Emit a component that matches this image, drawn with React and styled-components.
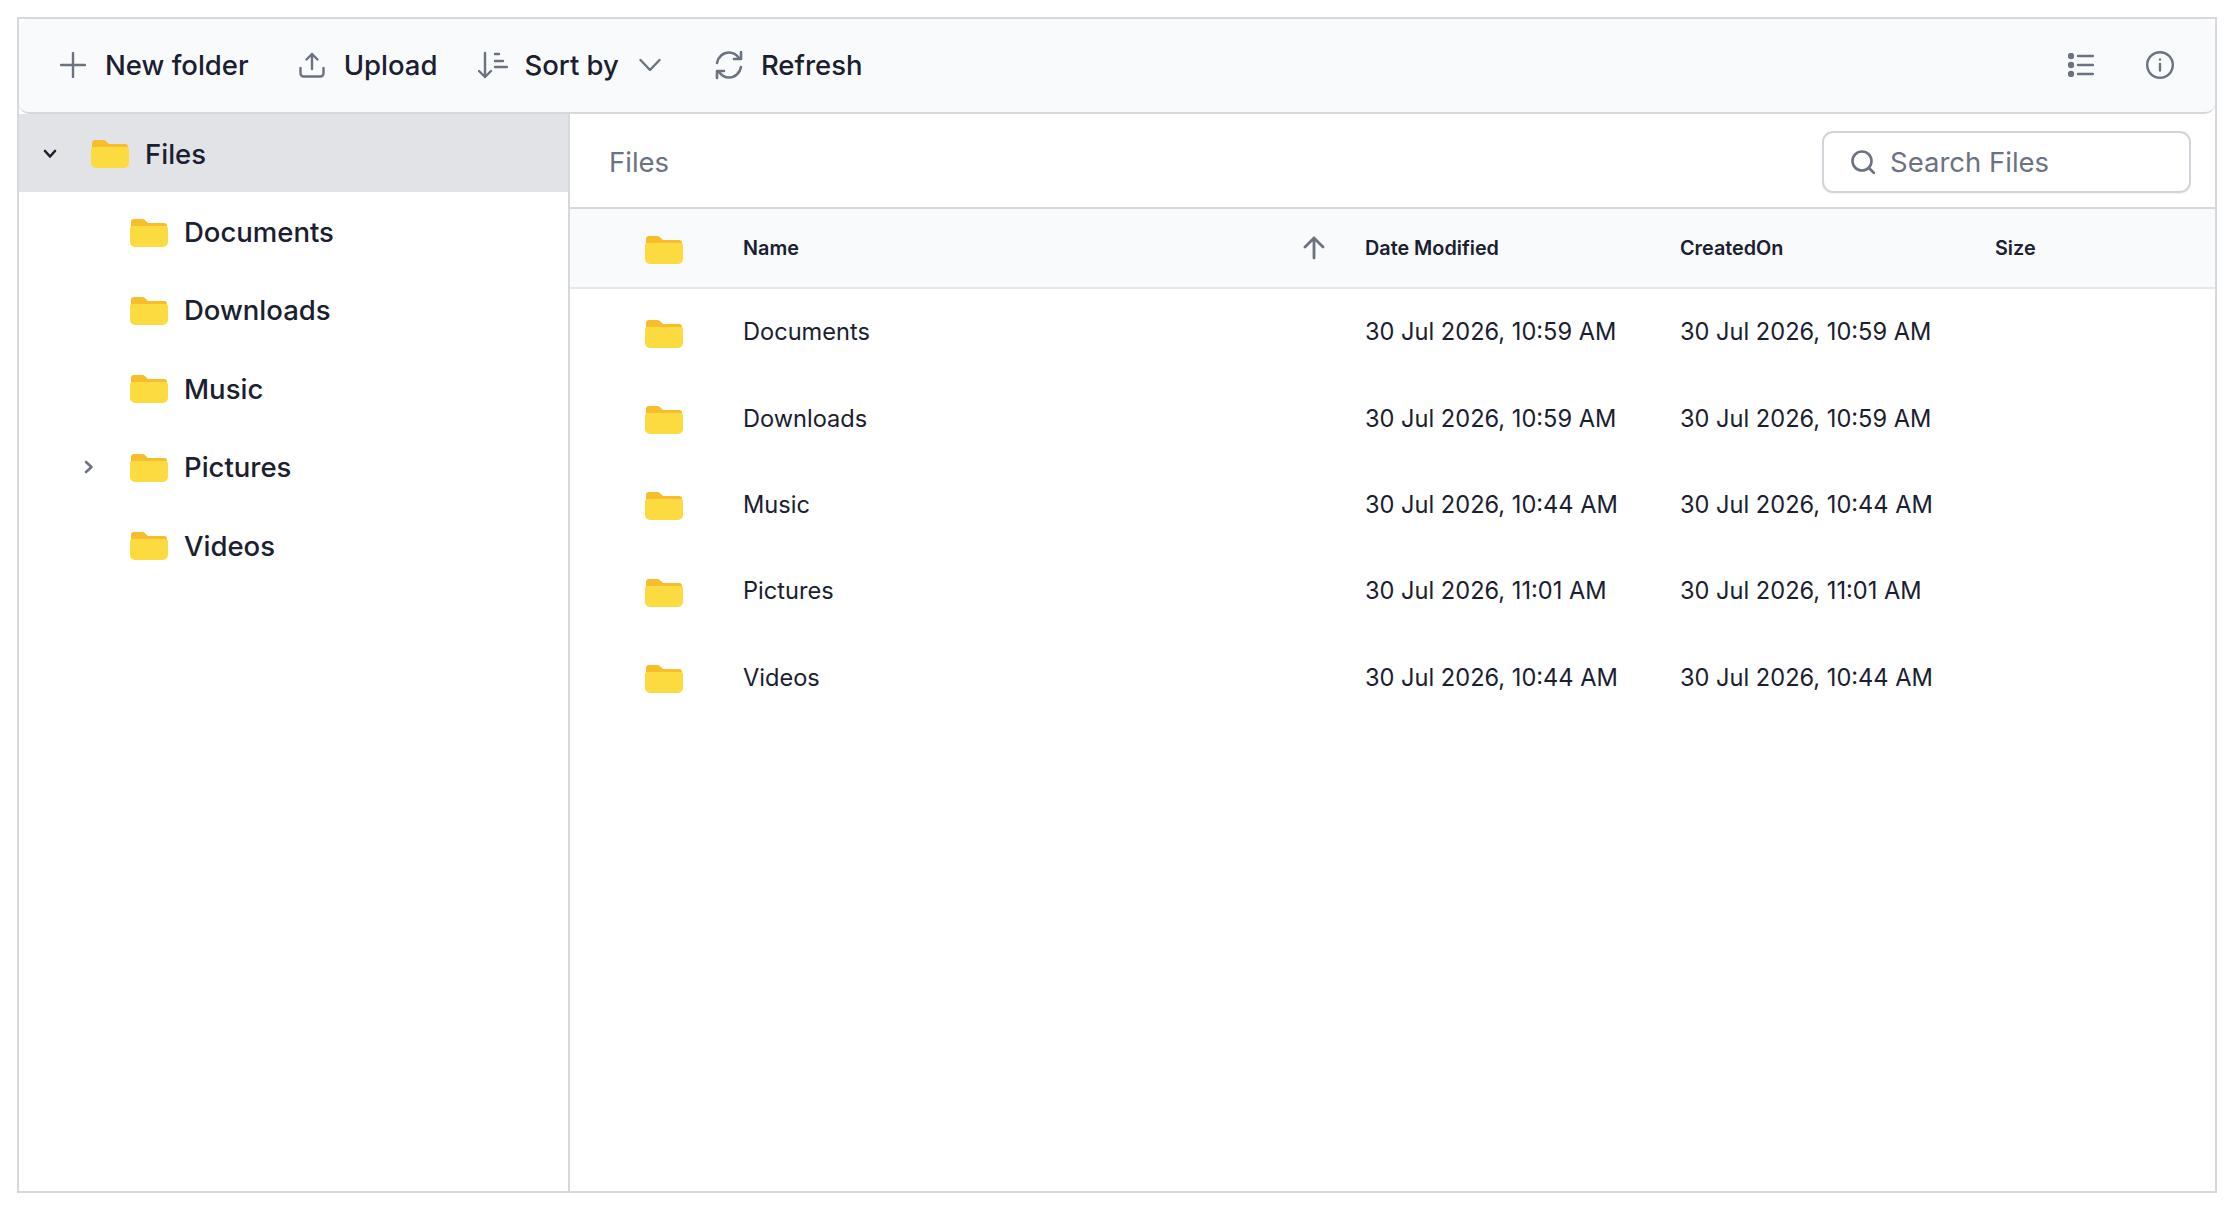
import React from "react";
import styled, { createGlobalStyle } from "styled-components";

const GlobalStyle = createGlobalStyle`
  html, body {
    margin: 0;
    padding: 0;
    background: #fff;
    font-family: Inter, "Noto Sans", sans-serif;
    color: #111827;
  }
  * {
    box-sizing: border-box;
  }
`;

const Page = styled.div`
  padding: 17px 0 0 17px;
`;
const Frame = styled.div`
  width: 2200px;
  height: 1176px;
  border: 2px solid #d6d8dc;
  display: flex;
  flex-direction: column;
  background: #fff;
`;
const Toolbar = styled.div`
  height: 95px;
  flex: none;
  display: flex;
  align-items: center;
  justify-content: space-between;
  padding: 0 0 1px 41px;
  background: #f9fafb;
  border-bottom: 2px solid #d6d8dc;
  border-radius: 10px;
`;
const ToolGroup = styled.div`
  display: flex;
  align-items: center;
`;
const ToolButton = styled.div`
  display: flex;
  align-items: center;
  gap: ${(p) => p.$gap || 14}px;
  margin-right: ${(p) => p.$after || 0}px;
  font-size: 27.5px;
  font-weight: 500;
  color: #1a2030;
  white-space: nowrap;
`;
const Caret = styled.span`
  display: flex;
  margin-left: 4px;
`;
const Icons = styled.div`
  display: flex;
  align-items: center;
  gap: 52px;
  padding-right: 41px;
`;
const Body = styled.div`
  flex: 1;
  display: flex;
  min-height: 0;
`;
const Sidebar = styled.div`
  width: 551px;
  flex: none;
  border-right: 2px solid #d6d8dc;
`;
const TreeRow = styled.div`
  height: 78.4px;
  display: flex;
  align-items: center;
  padding: 1px 0 0 ${(p) => p.$level * 39 + 21}px;
  gap: 16px;
  background: ${(p) => (p.$selected ? "#e1e3e7" : "transparent")};
  font-size: 27.5px;
  font-weight: 500;
  color: #1a2030;
`;
const Toggle = styled.div`
  width: 20px;
  height: 20px;
  flex: none;
  display: flex;
  align-items: center;
  justify-content: center;
  color: ${(p) => p.$color};
  margin-right: 15px;
`;
const Main = styled.div`
  flex: 1;
  min-width: 0;
`;
const Crumbs = styled.div`
  height: 95px;
  display: flex;
  align-items: center;
  justify-content: space-between;
  padding: 2px 24px 0 39px;
  border-bottom: 2px solid #d6d8dc;
  font-size: 27.5px;
  color: #6b7280;
`;
const Search = styled.div`
  width: 369px;
  height: 62px;
  display: flex;
  align-items: center;
  gap: 15px;
  padding-left: 27px;
  border: 2px solid #d1d5db;
  border-radius: 11px;
  box-shadow: 0 1px 2px rgba(0, 0, 0, 0.06);
  font-size: 27.5px;
  color: #6b7280;
`;
const TableRow = styled.div`
  display: grid;
  grid-template-columns: 173px 622px 315px 315px 1fr;
  align-items: center;
  height: ${(p) => (p.$head ? 79.5 : 86.4)}px;
  background: ${(p) => (p.$head ? "#f9fafb" : "transparent")};
  border-bottom: ${(p) => (p.$head ? "2px solid #e5e7eb" : "none")};
  font-size: ${(p) => (p.$head ? 19.8 : 23.6)}px;
  font-weight: ${(p) => (p.$head ? 600 : 400)};
  color: #1a2030;
`;
const IconCell = styled.div`
  display: flex;
  justify-content: center;
  padding: 3px 0 0 15px;
`;
const NameCell = styled.div`
  display: flex;
  align-items: center;
  justify-content: space-between;
  padding-right: 39px;
`;

const FolderIcon = () => (
  <svg width="38" height="29" viewBox="0 0 38 29" style={{ display: "block" }}>
    <path d="M1 4a3 3 0 0 1 3-3h8.500a3 3 0 0 1 2 .8L18 5h16a3 3 0 0 1 3 3v6H1z" fill="#f8bd2b" />
    <path d="M0 10.500A2.500 2.500 0 0 1 2.500 8h33a2.500 2.500 0 0 1 2.500 2.500V24a5 5 0 0 1-5 5H5a5 5 0 0 1-5-5z" fill="#fbdb40" />
  </svg>
);

const stroke = {
  fill: "none",
  stroke: "#6b7280",
  strokeWidth: 2.4,
  strokeLinecap: "round",
  strokeLinejoin: "round",
};

const PlusIcon = () => (
  <svg width="26" height="26" viewBox="0 0 26 26" {...stroke}>
    <path d="M13 1v24M1 13h24" />
  </svg>
);
const UploadIcon = () => (
  <svg width="26" height="26" viewBox="0 0 26 26" {...stroke}>
    <path d="M13 17V2M7.500 7.500 13 2l5.500 5.500" />
    <path d="M1.500 16v5.500a3 3 0 0 0 3 3h17a3 3 0 0 0 3-3V16" />
  </svg>
);
const SortIcon = () => (
  <svg width="30" height="28" viewBox="0 0 30 28" {...stroke}>
    <path d="M7 2v24M1 20l6 6 6-6" />
    <path d="M17 3h4M17 10h8M17 16h12" />
  </svg>
);
const ChevronDown = () => (
  <svg width="22" height="14" viewBox="0 0 22 14" {...stroke}>
    <path d="M1.500 2 11 12l9.500-10" />
  </svg>
);
const RefreshIcon = () => (
  <svg width="30" height="30" viewBox="0 0 30 30" {...stroke} strokeWidth="2.600">
    <path d="M3 13C4 7 9 2.500 15 2.500c4 0 7.500 2 10 5.500" />
    <path d="M27 17c-1 6-6 10.500-12 10.500-4 0-7.500-2-10-5.500" />
    <path d="M27 2v7h-7M3 28v-7h7" />
  </svg>
);
const ListIcon = () => (
  <svg width="26" height="24" viewBox="0 0 26 24" {...stroke}>
    <circle cx="3" cy="3" r="2" fill="#6b7280" />
    <circle cx="3" cy="12" r="2" fill="#6b7280" />
    <circle cx="3" cy="21" r="2" fill="#6b7280" />
    <path d="M10 3h15M10 12h15M10 21h15" />
  </svg>
);
const InfoIcon = () => (
  <svg width="28" height="28" viewBox="0 0 28 28" {...stroke}>
    <circle cx="14" cy="14" r="12.800" />
    <path d="M14 13v6.500M14 8.500v.1" />
  </svg>
);
const SearchIcon = () => (
  <svg width="24" height="24" viewBox="0 0 24 24" {...stroke} strokeWidth="2.600">
    <circle cx="11" cy="11" r="9.500" />
    <path d="m18 18 5 5" />
  </svg>
);
const ArrowUp = () => (
  <svg width="24" height="24" viewBox="0 0 24 24" {...stroke} strokeWidth="2.800">
    <path d="M12 22V2M3 11l9-9 9 9" />
  </svg>
);
const TreeChevronDown = () => (
  <svg width="14" height="10" viewBox="0 0 14 10" fill="none" stroke="currentColor" strokeWidth="2.600" strokeLinecap="round" strokeLinejoin="round">
    <path d="m2 2 5 5.500L12 2" />
  </svg>
);
const TreeChevronRight = () => (
  <svg width="10" height="14" viewBox="0 0 10 14" fill="none" stroke="currentColor" strokeWidth="2.600" strokeLinecap="round" strokeLinejoin="round">
    <path d="m2 2 5.500 5L2 12" />
  </svg>
);

const folders = [
  { name: "Documents", modified: "30 Jul 2026, 10:59 AM" },
  { name: "Downloads", modified: "30 Jul 2026, 10:59 AM" },
  { name: "Music", modified: "30 Jul 2026, 10:44 AM" },
  { name: "Pictures", modified: "30 Jul 2026, 11:01 AM", children: true },
  { name: "Videos", modified: "30 Jul 2026, 10:44 AM" },
];

export default function App() {
  return (
    <Page>
      <GlobalStyle />
      <Frame>
        <Toolbar>
          <ToolGroup>
            <ToolButton $gap={19} $after={50}>
              <PlusIcon />
              New folder
            </ToolButton>
            <ToolButton $gap={19} $after={41}>
              <UploadIcon />
              Upload
            </ToolButton>
            <ToolButton $gap={16} $after={53}>
              <SortIcon />
              Sort by
              <Caret>
                <ChevronDown />
              </Caret>
            </ToolButton>
            <ToolButton $gap={17}>
              <RefreshIcon />
              Refresh
            </ToolButton>
          </ToolGroup>
          <Icons>
            <ListIcon />
            <InfoIcon />
          </Icons>
        </Toolbar>
        <Body>
          <Sidebar>
            <TreeRow $level={0} $selected>
              <Toggle $color="#1a2030">
                <TreeChevronDown />
              </Toggle>
              <FolderIcon />
              Files
            </TreeRow>
            {folders.map((f) => (
              <TreeRow key={f.name} $level={1}>
                <Toggle $color="#6b7280">{f.children && <TreeChevronRight />}</Toggle>
                <FolderIcon />
                {f.name}
              </TreeRow>
            ))}
          </Sidebar>
          <Main>
            <Crumbs>
              Files
              <Search>
                <SearchIcon />
                Search Files
              </Search>
            </Crumbs>
            <TableRow $head>
              <IconCell>
                <FolderIcon />
              </IconCell>
              <NameCell>
                Name
                <ArrowUp />
              </NameCell>
              <div>Date Modified</div>
              <div>CreatedOn</div>
              <div>Size</div>
            </TableRow>
            {folders.map((f) => (
              <TableRow key={f.name}>
                <IconCell>
                  <FolderIcon />
                </IconCell>
                <NameCell>{f.name}</NameCell>
                <div>{f.modified}</div>
                <div>{f.modified}</div>
                <div />
              </TableRow>
            ))}
          </Main>
        </Body>
      </Frame>
    </Page>
  );
}
